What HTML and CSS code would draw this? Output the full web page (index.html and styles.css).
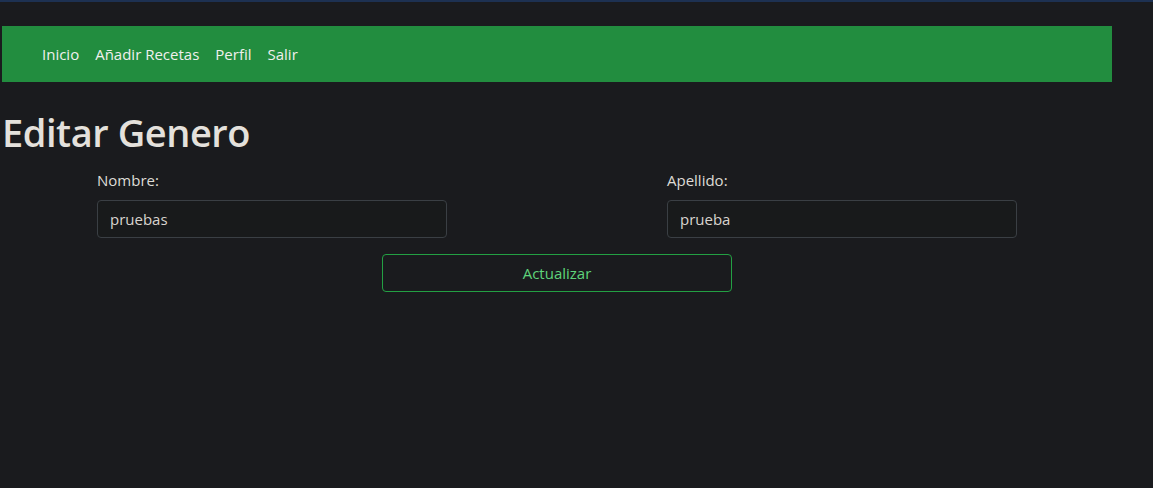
FILE: index.html
```html
<!DOCTYPE html>
<html lang="es">
<head>
<meta charset="utf-8">
<title>Editar Genero</title>
<link rel="stylesheet" href="styles.css">
</head>
<body>
<div class="topline"></div>
<div class="page">
  <nav class="navbar">
    <a href="#" class="nav-link">Inicio</a>
    <a href="#" class="nav-link">Añadir Recetas</a>
    <a href="#" class="nav-link">Perfil</a>
    <a href="#" class="nav-link">Salir</a>
  </nav>
  <h1 class="title">Editar Genero</h1>
  <form class="form">
    <div class="fields">
      <div class="field">
        <label class="label">Nombre:</label>
        <input class="input" type="text" value="pruebas">
      </div>
      <div class="field">
        <label class="label">Apellido:</label>
        <input class="input" type="text" value="prueba">
      </div>
    </div>
    <div class="actions">
      <button type="button" class="btn">Actualizar</button>
    </div>
  </form>
</div>
</body>
</html>
```
FILE: styles.css
```css
* { box-sizing: border-box; }
html, body {
  margin: 0;
  background: #1a1b1e;
  color: #e8e6e3;
  font-family: "Open Sans", "Noto Sans", sans-serif;
  font-size: 16px;
}
.topline {
  height: 2px;
  background: #1d3152;
}
.page {
  width: 1114px;
  padding-top: 24px;
}
.navbar {
  margin-left: 2px;
  width: 1110px;
  height: 56px;
  background: #228d3f;
  display: flex;
  align-items: center;
  padding-left: 32px;
}
.nav-link {
  color: #f0f0ee;
  text-decoration: none;
  padding: 0 8px;
  font-size: 15px;
}
.title {
  margin: 28px 0 0 2px;
  font-size: 38px;
  font-weight: 600;
  letter-spacing: -0.45px;
  line-height: 1.2;
  color: #e4e1dc;
}
.form {
  margin-top: 12px;
}
.fields {
  display: flex;
  justify-content: center;
  gap: 220px;
}
.field {
  width: 350px;
  display: flex;
  flex-direction: column;
}
.label {
  font-size: 15px;
  line-height: 24px;
  margin-bottom: 8px;
  color: #dedbd6;
}
.input {
  height: 38px;
  border: 1px solid #3a3f44;
  border-radius: 4px;
  background: #181a1b;
  color: #d8d4cf;
  font-family: inherit;
  font-size: 15px;
  padding: 0 12px;
}
.actions {
  display: flex;
  justify-content: center;
  margin-top: 16px;
}
.btn {
  width: 350px;
  height: 38px;
  border: 1px solid #23a043;
  border-radius: 4px;
  background: transparent;
  color: #5fd47b;
  font-family: inherit;
  font-size: 15px;
}
```
